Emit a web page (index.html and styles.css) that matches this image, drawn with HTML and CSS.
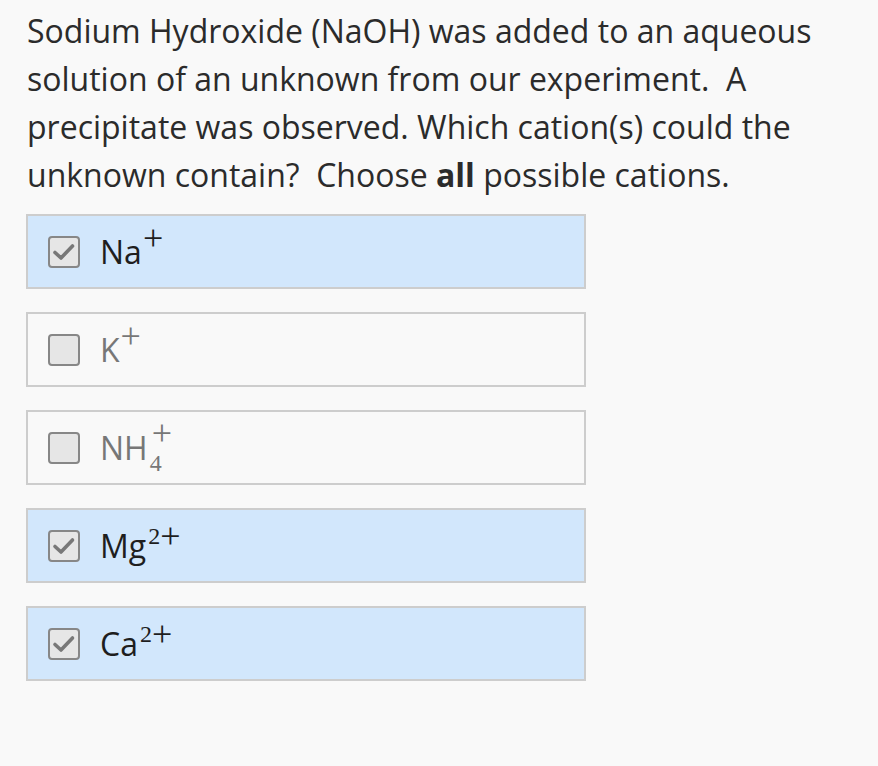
FILE: index.html
```html
<!DOCTYPE html>
<html>
<head>
<meta charset="utf-8">
<link rel="stylesheet" href="styles.css">
</head>
<body>
<div class="page">
  <p class="question">Sodium Hydroxide (NaOH) was added to an aqueous solution of an unknown from our experiment.&nbsp; A precipitate was observed. Which cation(s) could the unknown contain?&nbsp; Choose <b>all</b> possible cations.</p>
  <ul class="choices">
    <li class="choice selected">
      <span class="box"><svg viewBox="0 0 28 28" width="28" height="28"><path d="M5 14.5 L11 20 L22.5 8" fill="none" stroke="#787878" stroke-width="3.6" stroke-linecap="round" stroke-linejoin="round"/></svg></span>
      <span class="label">Na<span class="plus">+</span></span>
    </li>
    <li class="choice">
      <span class="box"></span>
      <span class="label">K<span class="plus">+</span></span>
    </li>
    <li class="choice">
      <span class="box"></span>
      <span class="label">NH<span class="sub">4</span><span class="plus over">+</span></span>
    </li>
    <li class="choice selected">
      <span class="box"><svg viewBox="0 0 28 28" width="28" height="28"><path d="M5 14.5 L11 20 L22.5 8" fill="none" stroke="#787878" stroke-width="3.6" stroke-linecap="round" stroke-linejoin="round"/></svg></span>
      <span class="label">Mg<span class="sup">2</span><span class="plus low">+</span></span>
    </li>
    <li class="choice selected">
      <span class="box"><svg viewBox="0 0 28 28" width="28" height="28"><path d="M5 14.5 L11 20 L22.5 8" fill="none" stroke="#787878" stroke-width="3.6" stroke-linecap="round" stroke-linejoin="round"/></svg></span>
      <span class="label">Ca<span class="sup">2</span><span class="plus low">+</span></span>
    </li>
  </ul>
</div>
</body>
</html>
```

FILE: styles.css
```css
html, body {
  margin: 0;
  padding: 0;
  background: #f9f9f9;
}
body {
  font-family: "Open Sans", "Noto Sans", sans-serif;
  color: #2b2b2b;
}
.page {
  padding: 7px 26px 0 27px;
}
.question {
  margin: 0;
  font-size: 32px;
  line-height: 48px;
  width: 805px;
}
.question b {
  font-weight: 700;
}
.choices {
  list-style: none;
  margin: 15px 0 0 -1px;
  padding: 0;
  width: 560px;
  display: flex;
  flex-direction: column;
  gap: 23px;
}
.choice {
  box-sizing: border-box;
  height: 75px;
  border: 2px solid #cdcdcd;
  background: #f9f9f9;
  display: flex;
  align-items: center;
  padding-left: 20px;
  gap: 20px;
}
.choice.selected {
  background: #d2e7fc;
}
.box {
  box-sizing: border-box;
  width: 32px;
  height: 32px;
  border: 2px solid #878787;
  border-radius: 4px;
  background: #e6e6e6;
  display: flex;
  align-items: center;
  justify-content: center;
  flex: none;
}
.label {
  font-size: 32px;
  line-height: 44px;
  color: #777;
  white-space: nowrap;
}
.selected .label {
  color: #1e1e1e;
}
.plus,
.sup,
.sub {
  font-family: "Liberation Serif", "Times New Roman", serif;
  line-height: 0;
}
.plus {
  font-size: 36px;
  vertical-align: 14px;
  margin-left: 1px;
}
.plus.low {
  vertical-align: 10px;
  margin-left: 0;
}
.plus.over {
  vertical-align: 15px;
  margin-left: -10px;
}
.sup {
  font-size: 24px;
  vertical-align: 14px;
  margin-left: 2px;
}
.sub {
  font-size: 24px;
  vertical-align: -11px;
  margin-left: 2px;
}
```
